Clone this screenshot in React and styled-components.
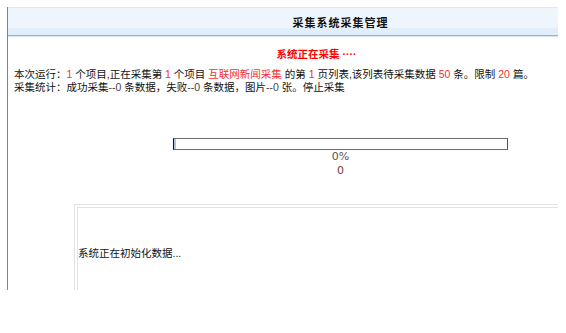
import React from "react"
import styled, { createGlobalStyle } from "styled-components"

const GlobalStyle = createGlobalStyle`
  html, body {
    margin: 0;
    padding: 0;
    background: #fff;
  }
  body {
    font-family: "Liberation Sans", "Noto Sans CJK SC", sans-serif;
    font-size: 10.5px;
    color: #111;
  }
`

const App = () => {
  return (
    <>
      <GlobalStyle />
      <Frame>
        <Header>
          <Title>采集系统采集管理</Title>
        </Header>
        <Status>系统正在采集 ····</Status>
        <Info>
          <Line>
            本次运行：<Num>1</Num> 个项目,正在采集第 <Num>1</Num> 个项目{" "}
            <Num>互联网新闻采集</Num> 的第 <Num>1</Num> 页列表,该列表待采集数据{" "}
            <Num>50</Num> 条。限制 <Num>20</Num> 篇。
          </Line>
          <Line>
            采集统计：成功采集<Dim>--0</Dim> 条数据，失败<Dim>--0</Dim> 条数据，图片<Dim>--0</Dim> 张。停止采集
          </Line>
        </Info>
        <Progress>
          <Bar>
            <Fill style={{ width: "2px" }} />
          </Bar>
          <Percent>0%</Percent>
          <Count>0</Count>
        </Progress>
        <LogBox>
          <LogText>系统正在初始化数据...</LogText>
        </LogBox>
      </Frame>
    </>
  )
}

export default App

const Frame = styled.div`
  margin: 7px 0 0 7px;
  width: 550px;
  height: 283px;
  border-left: 1px solid #4a91c7;
  overflow: hidden;
`

const Header = styled.div`
  height: 27px;
  padding-left: 115px;
  display: flex;
  align-items: center;
  justify-content: center;
  border-top: 1px solid #d9e9f5;
  border-bottom: 1px solid #8db7d5;
  box-shadow: 0 1px 0 #d3e6f3;
  background: linear-gradient(#eef5fc 0, #eef5fc 74%, #e2eef9 74%, #e2eef9 100%);
`

const Title = styled.h1`
  margin: 0;
  font-family: "Noto Sans CJK SC", sans-serif;
  font-size: 11px;
  font-weight: 700;
  letter-spacing: 1px;
  color: #111;
`

const Status = styled.div`
  margin-top: 11px;
  padding-left: 67px;
  text-align: center;
  line-height: 14px;
  font-weight: 700;
  color: #ff0000;
`

const Info = styled.div`
  margin-top: 7px;
  padding-left: 6px;
  line-height: 13px;
`

const Line = styled.div`
  white-space: nowrap;
`

const Num = styled.span`
  color: #f43030;
`

const Dim = styled.span`
  color: #444;
`

const Progress = styled.div`
  margin-top: 44px;
  padding-left: 115px;
  display: flex;
  flex-direction: column;
  align-items: center;
  font-family: "DejaVu Sans", sans-serif;
  font-size: 11px;
  line-height: 14px;
`

const Bar = styled.div`
  width: 333px;
  height: 10px;
  border: 1px solid;
  border-color: #6a6a6a #555 #6a6a6a #111;
  background: #fff;
`

const Fill = styled.div`
  height: 100%;
  background: #a9c8e9;
`

const Percent = styled.div`
  color: #5e5050;
`

const Count = styled.div`
  color: #7d3a2c;
`

const LogBox = styled.div`
  margin: 26px 0 0 66px;
  width: 560px;
  height: 120px;
  border: 4px double #e2e2e2;
  padding-top: 38px;
`

const LogText = styled.div`
  line-height: 14px;
  color: #111;
`
